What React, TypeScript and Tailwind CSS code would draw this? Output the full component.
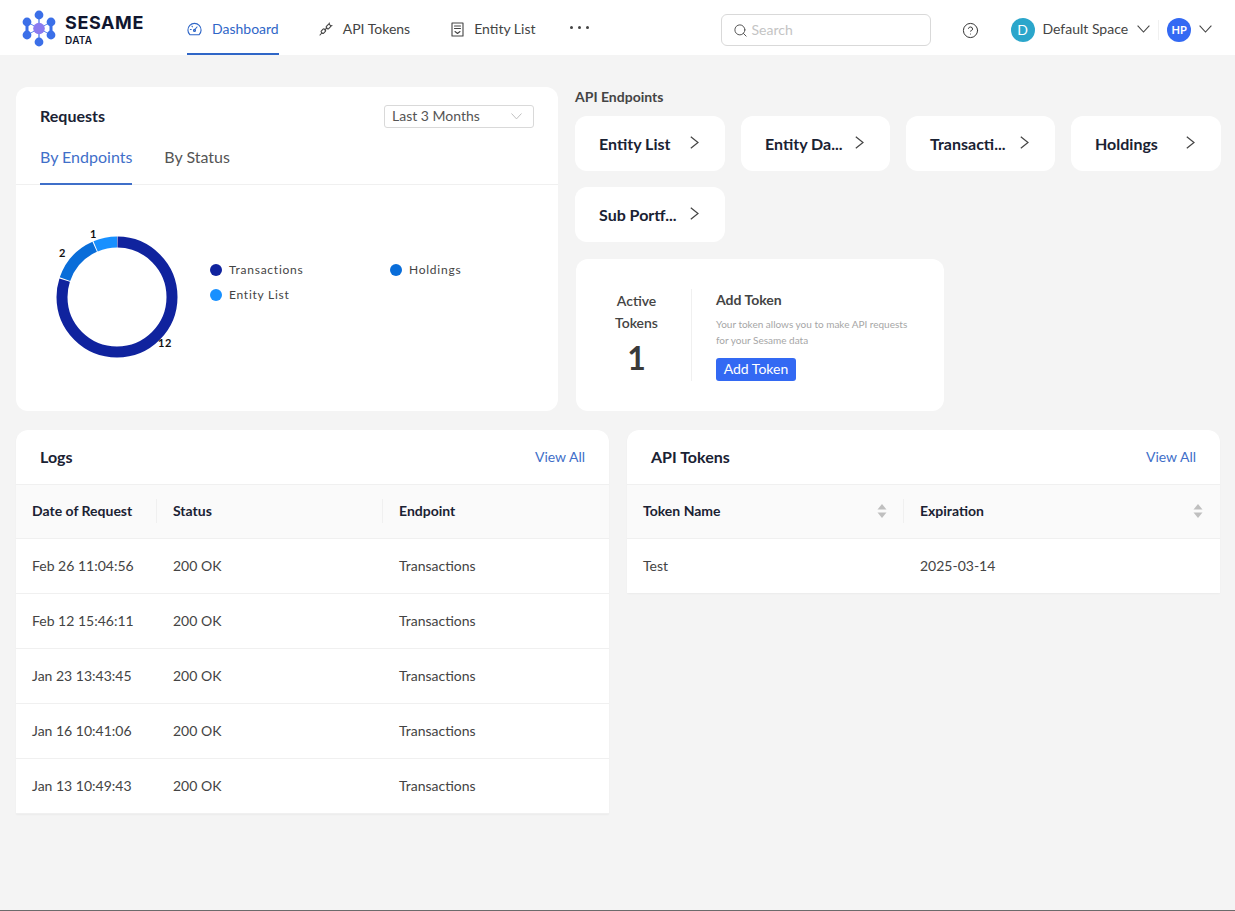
import React from "react";
import { CircleHelp, Search } from "lucide-react";

const endpoints = ["Entity List", "Entity Da...", "Transacti...", "Holdings", "Sub Portf..."];

const logs = [
  "Feb 26 11:04:56",
  "Feb 12 15:46:11",
  "Jan 23 13:43:45",
  "Jan 16 10:41:06",
  "Jan 13 10:49:43",
];

function Logo() {
  return (
    <svg width="36" height="38" viewBox="0 0 36 38" className="shrink-0 mt-[3px]">
      <g stroke="#3B6FE8" fill="none">
        <path d="M18 5 L18 32" strokeWidth="1.2" />
        <path d="M6 12 L6 25 M30 12 L30 25" strokeWidth="3" />
        <path d="M6 12 L18 18.5 L6 25 M30 12 L18 18.5 L30 25" strokeWidth="0.8" />
      </g>
      <circle cx="18" cy="5" r="4.4" fill="#3B6FE8" />
      <circle cx="18" cy="32" r="4.4" fill="#3B6FE8" />
      <circle cx="6" cy="12" r="4.4" fill="#3B6FE8" />
      <circle cx="6" cy="25" r="4.4" fill="#3B6FE8" />
      <circle cx="30" cy="12" r="4.4" fill="#3B6FE8" />
      <circle cx="30" cy="25" r="4.4" fill="#3B6FE8" />
      <circle cx="18" cy="18.5" r="5.8" fill="#8B7BF0" />
    </svg>
  );
}

function GaugeIcon() {
  return (
    <svg width="15" height="15" viewBox="0 0 15 15" fill="none" stroke="#2f66c7" strokeWidth="1.1" strokeLinecap="round">
      <path d="M3 12.8 A6.6 6.6 0 1 1 12 12.8 Z" strokeLinejoin="round" />
      <path d="M7.5 8 L10 5" />
      <circle cx="7.5" cy="8.4" r="1" />
      <path d="M3.4 7.5h.8M5 4.2l.4.6" />
    </svg>
  );
}

function PlugIcon() {
  return (
    <svg width="14" height="14" viewBox="0 0 14 14" fill="none" stroke="#444" strokeWidth="1.1" strokeLinecap="round" strokeLinejoin="round">
      <rect x="2.2" y="7.6" width="4.4" height="3.2" rx="1" transform="rotate(-45 4.4 9.2)" />
      <rect x="7.2" y="3" width="4.4" height="3.2" rx="1" transform="rotate(-45 9.4 4.6)" />
      <path d="M5.8 7.8 L7.8 6" />
      <path d="M1 13 L2.8 11" />
      <path d="M10.4 1 L10 2 M13 3.6 L12 4" />
    </svg>
  );
}

function DocIcon() {
  return (
    <svg width="13" height="15" viewBox="0 0 13 15" fill="none" stroke="#444" strokeWidth="1.1" strokeLinecap="round" strokeLinejoin="round">
      <path d="M1 1 H12 V14 H1 Z" />
      <path d="M3.5 4 H9.5 M3.5 6.5 H9.5" />
      <path d="M4 9.5 L6.5 11.5 L9 9.5" />
    </svg>
  );
}

function Chevron({ color = "#444", width = 13 }: { color?: string; width?: number }) {
  return (
    <svg width={width} height={(width * 8) / 13} viewBox="0 0 13 8" fill="none" stroke={color} strokeWidth="1.1" className="shrink-0">
      <path d="M0.6 0.6 L6.5 7 L12.4 0.6" />
    </svg>
  );
}

function ArrowRight() {
  return (
    <svg width="9" height="13" viewBox="0 0 9 13" fill="none" stroke="#444" strokeWidth="1.2" className="shrink-0 -mt-[2px]">
      <path d="M0.8 0.8 L8 6.5 L0.8 12.2" />
    </svg>
  );
}

function SortArrows() {
  return (
    <svg width="10" height="16" viewBox="0 0 10 16" fill="#bfbfbf">
      <path d="M5 1 L9.5 6.5 H0.5 Z" />
      <path d="M5 15 L9.5 9.5 H0.5 Z" />
    </svg>
  );
}

// donut segments out of 15 requests, clockwise from 12 o'clock
function Donut() {
  const r = 55;
  const c = 2 * Math.PI * r;
  const segments = [
    { value: 12, color: "#10239e" },
    { value: 2, color: "#096dd9" },
    { value: 1, color: "#1890ff" },
  ];
  let used = 0;
  return (
    <svg width="150" height="150" viewBox="0 0 150 150" className="shrink-0">
      <g transform="rotate(-90 77 77)">
        {segments.map((s) => {
          const len = (s.value / 15) * c;
          const el = (
            <circle
              key={s.color}
              cx="77"
              cy="77"
              r={r}
              fill="none"
              stroke={s.color}
              strokeWidth="11"
              strokeDasharray={`${len - 1} ${c - len + 1}`}
              strokeDashoffset={-used - 0.5}
            />
          );
          used += len;
          return el;
        })}
      </g>
      <g fontSize="11" fontWeight="700" fill="#111" letterSpacing="0.5">
        <text x="50" y="18">1</text>
        <text x="19" y="37">2</text>
        <text x="118" y="127">12</text>
      </g>
    </svg>
  );
}

function LegendItem({ color, label }: { color: string; label: string }) {
  return (
    <div className="flex items-center gap-[7px] h-[25px]">
      <span className="w-3 h-3 rounded-full" style={{ backgroundColor: color }} />
      <span className="text-xs tracking-[0.75px] text-[#444]">{label}</span>
    </div>
  );
}

function CardTitle({ title }: { title: string }) {
  return (
    <div className="flex items-center justify-between h-[55px] pl-6 pr-6 border-b border-[#f0f0f0]">
      <h2 className="text-base font-bold text-[#1a2233]">{title}</h2>
      <a className="text-sm text-[#3f6fc9]">View All</a>
    </div>
  );
}

export default function App() {
  return (
    <div className="min-h-[911px] h-[911px] bg-[#f4f4f4] border-b border-[#6b6b6b] font-['Lato',sans-serif] text-[#444] flex flex-col overflow-hidden">
      {/* Header */}
      <header className="h-[55px] bg-white flex items-center shrink-0">
        <div className="w-[187px] pl-[21px] flex items-center gap-2 shrink-0">
          <Logo />
          <div className="flex flex-col pt-[3px]">
            <span className="font-['Inter',sans-serif] font-bold text-[18px] leading-[20px] tracking-[0.6px] text-[#10162f]">SESAME</span>
            <span className="mt-[2px] font-['Inter',sans-serif] font-semibold text-[10px] leading-[11px] tracking-[0.3px] text-[#10162f]">DATA</span>
          </div>
        </div>
        <nav className="flex items-center h-full text-sm">
          <a className="flex items-center gap-[10px] h-full pt-[5px] border-b-2 border-[#2f66c7] text-[#2f66c7]">
            <GaugeIcon />
            Dashboard
          </a>
          <a className="flex items-center gap-[10px] h-full pt-[3px] ml-10">
            <PlugIcon />
            API Tokens
          </a>
          <a className="flex items-center gap-[10px] h-full pt-[3px] ml-[41px]">
            <DocIcon />
            Entity List
          </a>
          <span className="ml-[34px] flex gap-[5px]">
            <i className="w-[3px] h-[3px] rounded-full bg-[#444]" />
            <i className="w-[3px] h-[3px] rounded-full bg-[#444]" />
            <i className="w-[3px] h-[3px] rounded-full bg-[#444]" />
          </span>
        </nav>
        <div className="ml-[132px] flex items-center mt-[5px]">
          <div className="w-[210px] h-8 border border-[#d9d9d9] rounded-md flex items-center pl-[11px] gap-[4px]">
            <Search size={15} strokeWidth={1.6} className="text-[#555]" />
            <span className="text-sm text-[#c4c4c4]">Search</span>
          </div>
          <CircleHelp size={17} strokeWidth={1.4} className="ml-[31px] text-[#333]" />
          <span className="ml-[32px] w-6 h-6 rounded-full bg-[#2ba6cb] text-white text-sm flex items-center justify-center">D</span>
          <span className="ml-2 text-sm text-[#444] -mt-[2px]">Default Space</span>
          <span className="ml-[9px] -mt-[2px]"><Chevron /></span>
          <span className="ml-2 w-px h-5 bg-[#f0f0f0]" />
          <span className="ml-2 w-6 h-6 rounded-full bg-[#3369f3] text-white text-[11px] font-bold flex items-center justify-center">HP</span>
          <span className="ml-2 -mt-[2px]"><Chevron /></span>
        </div>
      </header>

      <main className="pl-4 pr-[15px] pt-8">
        <div className="flex gap-[17px]">
          {/* Requests */}
          <section className="w-[542px] h-[324px] bg-white rounded-xl shrink-0">
            <div className="flex items-center justify-between pl-6 pr-6 pt-[17px]">
              <h2 className="text-base font-bold text-[#1a2233]">Requests</h2>
              <div className="w-[150px] h-[23px] border border-[#d9d9d9] rounded-[3px] flex items-center justify-between pl-[7px] pr-[11px]">
                <span className="text-sm text-[#555]">Last 3 Months</span>
                <Chevron color="#bbb" width={11} />
              </div>
            </div>
            <div className="flex gap-8 pl-6 mt-[17px] border-b border-[#f0f0f0] h-[40px]">
              <span className="text-base text-[#3f6fc9] border-b-2 border-[#3f6fc9] h-[40px]">By Endpoints</span>
              <span className="text-base text-[#555]">By Status</span>
            </div>
            <div className="flex mt-[35px] pl-6">
              <Donut />
              <div className="grid grid-cols-[180px_180px] content-start mt-[37px] ml-[20px] h-[50px]">
                <LegendItem color="#10239e" label="Transactions" />
                <LegendItem color="#096dd9" label="Holdings" />
                <LegendItem color="#1890ff" label="Entity List" />
              </div>
            </div>
          </section>

          {/* API endpoints + token card */}
          <div className="flex-1 min-w-0">
            <h3 className="text-sm font-bold text-[#444] h-[29px] leading-[20px]">API Endpoints</h3>
            <div className="grid grid-cols-[150px_149px_149px_150px] gap-x-4 gap-y-4">
              {endpoints.map((name) => (
                <div key={name} className="h-[55px] bg-white rounded-xl flex items-center justify-between pl-6 pr-[26px]">
                  <span className="whitespace-nowrap text-base font-bold text-[#1a2233]">{name}</span>
                  <ArrowRight />
                </div>
              ))}
            </div>
            <div className="w-[368px] h-[152px] ml-px mt-[17px] bg-white rounded-xl flex items-center">
              <div className="w-[116px] h-[92px] border-r border-[#f0f0f0] text-center flex flex-col items-center shrink-0 pt-px pl-[6px]">
                <span className="text-sm font-semibold leading-[22px] text-[#444]">Active</span>
                <span className="text-sm font-semibold leading-[22px] text-[#444]">Tokens</span>
                <span className="mt-1 text-[32px] font-bold leading-[40px] text-[#3a3a3a]">1</span>
              </div>
              <div className="ml-6">
                <h4 className="text-sm font-bold text-[#444] leading-[20px]">Add Token</h4>
                <p className="text-[10px] text-[#a6a6a6] leading-4 mt-[6px] w-[200px]">
                  Your token allows you to make API requests for your Sesame data
                </p>
                <button className="block mt-[10px] w-20 h-[23px] rounded-[3px] bg-[#3369f3] text-white text-sm">Add Token</button>
              </div>
            </div>
          </div>
        </div>

        <div className="flex gap-[18px] mt-[19px] items-start">
          {/* Logs */}
          <section className="w-[593px] bg-white rounded-t-xl shadow-[0_1px_2px_rgba(0,0,0,0.04)] shrink-0">
            <CardTitle title="Logs" />
            <div className="grid grid-cols-[141px_226px_1fr] h-[54px] pb-[2px] items-center bg-[#fafafa] border-b border-[#f0f0f0] text-sm font-bold text-[#1a2233]">
              <span className="pl-4 border-r border-[#f0f0f0] leading-[24px]">Date of Request</span>
              <span className="pl-4 border-r border-[#f0f0f0] leading-[24px]">Status</span>
              <span className="pl-4">Endpoint</span>
            </div>
            {logs.map((date) => (
              <div key={date} className="grid grid-cols-[141px_226px_1fr] h-[55px] items-center border-b border-[#f0f0f0] text-sm text-[#444]">
                <span className="pl-4 whitespace-nowrap">{date}</span>
                <span className="pl-4">200 OK</span>
                <span className="pl-4">Transactions</span>
              </div>
            ))}
          </section>

          {/* API tokens */}
          <section className="flex-1 bg-white rounded-t-xl shadow-[0_1px_2px_rgba(0,0,0,0.04)]">
            <CardTitle title="API Tokens" />
            <div className="grid grid-cols-[277px_1fr] h-[54px] pb-[2px] items-center bg-[#fafafa] border-b border-[#f0f0f0] text-sm font-bold text-[#1a2233]">
              <div className="flex items-center justify-between pl-4 pr-[16px] border-r border-[#f0f0f0] h-6">
                <span>Token Name</span>
                <SortArrows />
              </div>
              <div className="flex items-center justify-between pl-4 pr-[17px] h-6">
                <span>Expiration</span>
                <SortArrows />
              </div>
            </div>
            <div className="grid grid-cols-[277px_1fr] h-[54px] items-center text-sm text-[#444]">
              <span className="pl-4">Test</span>
              <span className="pl-4">2025-03-14</span>
            </div>
          </section>
        </div>
      </main>
    </div>
  );
}
